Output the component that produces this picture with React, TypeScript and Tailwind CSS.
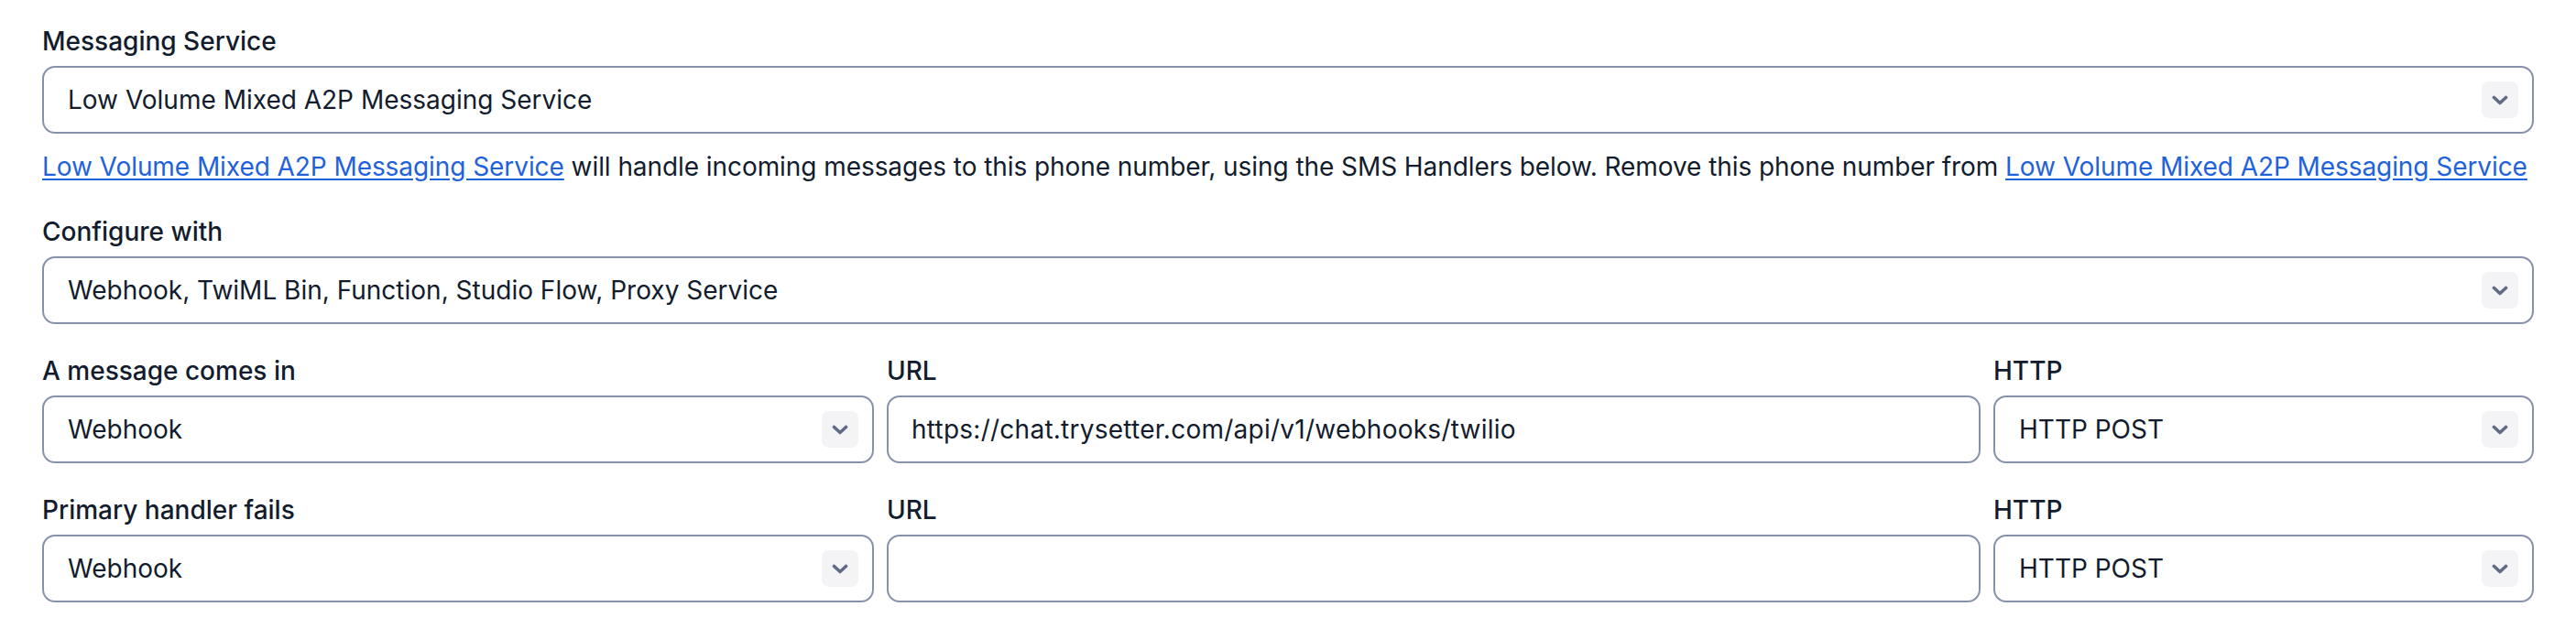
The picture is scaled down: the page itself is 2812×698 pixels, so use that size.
import React from "react";

function Chevron() {
  return (
    <svg width="18" height="11" viewBox="0 0 18 11" fill="none" aria-hidden="true">
      <polyline
        points="2.5,2.5 9,8.5 15.5,2.5"
        stroke="#606B85"
        strokeWidth="3.6"
        strokeLinecap="round"
        strokeLinejoin="round"
      />
    </svg>
  );
}

function SelectBox({ value }: { value: string }) {
  return (
    <div className="flex items-center h-[74px] border-2 border-[#8891AA] rounded-[14px] bg-white pl-[26px] pr-[15px]">
      <span className="flex-1 truncate">{value}</span>
      <span className="flex items-center justify-center w-[40px] h-[40px] rounded-[8px] bg-[#F4F4F6] shrink-0">
        <Chevron />
      </span>
    </div>
  );
}

function InputBox({ value }: { value: string }) {
  return (
    <div className="flex items-center h-[74px] border-2 border-[#8891AA] rounded-[14px] bg-white pl-[25px] pr-[15px]">
      <span className="flex-1 truncate tracking-[0.25px]">{value}</span>
    </div>
  );
}

function Label({ children }: { children: React.ReactNode }) {
  return <div className="h-[40px] leading-[40px] font-medium">{children}</div>;
}

function Field({ label, children }: { label: string; children: React.ReactNode }) {
  return (
    <div className="flex flex-col gap-[7px]">
      <Label>{label}</Label>
      {children}
    </div>
  );
}

export default function App() {
  const svc = "Low Volume Mixed A2P Messaging Service";
  return (
    <div className="min-h-screen w-full bg-white px-[46px] pt-[25px] font-['Inter','Noto_Sans',sans-serif] text-[28px] leading-[40px] text-[#121C2D]">
      <Field label="Messaging Service">
        <SelectBox value={svc} />
      </Field>
      <p className="mt-[16px] h-[40px] leading-[40px] whitespace-nowrap tracking-[-0.07px]">
        <a href="#" className="text-[#1F62DA] underline underline-offset-[3px]">
          {svc}
        </a>{" "}
        will handle incoming messages to this phone number, using the SMS Handlers below. Remove this phone number from{" "}
        <a href="#" className="text-[#1F62DA] underline underline-offset-[3px]">
          {svc}
        </a>
      </p>
      <div className="mt-[31px]">
        <Field label="Configure with">
          <SelectBox value="Webhook, TwiML Bin, Function, Studio Flow, Proxy Service" />
        </Field>
      </div>
      <div className="mt-[31px] grid grid-cols-[908px_1194px_1fr] gap-x-[14px] gap-y-[31px]">
        <Field label="A message comes in">
          <SelectBox value="Webhook" />
        </Field>
        <Field label="URL">
          <InputBox value="https://chat.trysetter.com/api/v1/webhooks/twilio" />
        </Field>
        <Field label="HTTP">
          <SelectBox value="HTTP POST" />
        </Field>
        <Field label="Primary handler fails">
          <SelectBox value="Webhook" />
        </Field>
        <Field label="URL">
          <InputBox value="" />
        </Field>
        <Field label="HTTP">
          <SelectBox value="HTTP POST" />
        </Field>
      </div>
    </div>
  );
}
